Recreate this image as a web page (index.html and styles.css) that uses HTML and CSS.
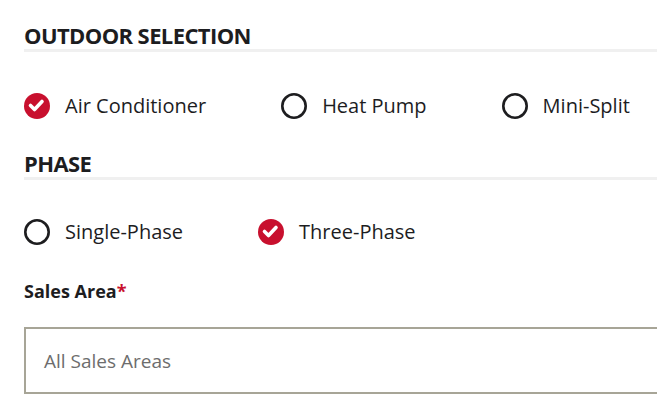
FILE: index.html
```html
<!DOCTYPE html>
<html lang="en">
<head>
<meta charset="utf-8">
<link rel="stylesheet" href="styles.css">
</head>
<body>
<div class="form">
  <section class="group">
    <h2 class="group-title">OUTDOOR SELECTION</h2>
    <div class="options">
      <label class="option">
        <svg class="radio" viewBox="0 0 26 26"><circle cx="13" cy="13" r="13" fill="#c8102e"/><path d="M6.5 12.5 L10.5 16.5 L18 8.5" fill="none" stroke="#fff" stroke-width="3.6" stroke-linecap="round" stroke-linejoin="round"/></svg>
        <span>Air Conditioner</span>
      </label>
      <label class="option">
        <svg class="radio" viewBox="0 0 26 26"><circle cx="13" cy="13" r="11.7" fill="none" stroke="#1d1d1f" stroke-width="2.6"/></svg>
        <span>Heat Pump</span>
      </label>
      <label class="option">
        <svg class="radio" viewBox="0 0 26 26"><circle cx="13" cy="13" r="11.7" fill="none" stroke="#1d1d1f" stroke-width="2.6"/></svg>
        <span>Mini-Split</span>
      </label>
    </div>
  </section>
  <section class="group">
    <h2 class="group-title">PHASE</h2>
    <div class="options options-tight">
      <label class="option">
        <svg class="radio" viewBox="0 0 26 26"><circle cx="13" cy="13" r="11.7" fill="none" stroke="#1d1d1f" stroke-width="2.6"/></svg>
        <span>Single-Phase</span>
      </label>
      <label class="option">
        <svg class="radio" viewBox="0 0 26 26"><circle cx="13" cy="13" r="13" fill="#c8102e"/><path d="M6.5 12.5 L10.5 16.5 L18 8.5" fill="none" stroke="#fff" stroke-width="3.6" stroke-linecap="round" stroke-linejoin="round"/></svg>
        <span>Three-Phase</span>
      </label>
    </div>
  </section>
  <div class="field">
    <div class="field-label">Sales Area<span class="req">*</span></div>
    <div class="select">All Sales Areas</div>
  </div>
</div>
</body>
</html>
```
FILE: styles.css
```css
html, body {
  margin: 0;
  padding: 0;
  background: #fff;
  overflow: hidden;
}
body {
  font-family: "Open Sans", "Noto Sans", sans-serif;
  color: #1d1d1f;
}
.form {
  width: 700px;
  padding: 23px 0 0 24px;
}
.group-title {
  margin: 0;
  font-size: 22px;
  font-weight: 700;
  line-height: 24px;
  letter-spacing: -0.6px;
  padding-bottom: 2px;
  border-bottom: 3px solid #f0f0f0;
  color: #1d1d1f;
}
.options {
  display: flex;
  align-items: flex-start;
  box-sizing: border-box;
  height: 99px;
  padding-top: 40px;
}
.options-tight {
  padding-top: 38px;
}
.option {
  display: flex;
  align-items: center;
  margin-right: 75px;
  font-size: 20px;
  line-height: 27px;
}
.radio {
  width: 26px;
  height: 26px;
  margin-right: 15px;
  flex: none;
}
.field-label {
  font-size: 18px;
  font-weight: 700;
  line-height: 24px;
}
.req {
  color: #c8102e;
}
.select {
  margin-top: 24px;
  height: 63px;
  border: 2px solid #a7a597;
  padding-left: 18px;
  display: flex;
  align-items: center;
  font-size: 19px;
  color: #6d6d6d;
}
```
